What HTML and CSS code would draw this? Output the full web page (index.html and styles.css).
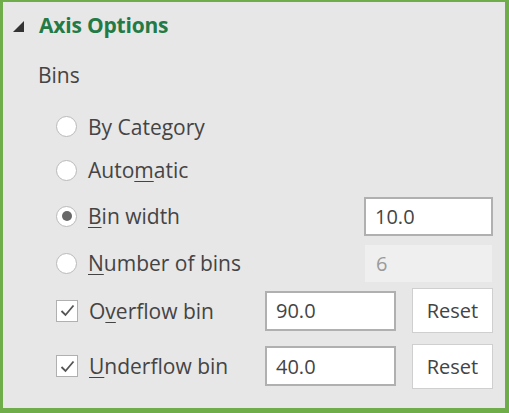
FILE: index.html
```html
<!DOCTYPE html>
<html lang="en">
<head>
<meta charset="utf-8">
<title>Axis Options</title>
<link rel="stylesheet" href="styles.css">
</head>
<body>
<div class="panel">
  <div class="header">
    <svg class="tri" width="12" height="11" viewBox="0 0 12 11"><polygon points="11,0 11,11 0,11" fill="#333"/></svg>
    <span class="title">Axis Options</span>
  </div>
  <div class="bins">Bins</div>
  <div class="row r1">
    <span class="radio"></span>
    <span class="label">By Category</span>
  </div>
  <div class="row r2">
    <span class="radio"></span>
    <span class="label">Auto<u>m</u>atic</span>
  </div>
  <div class="row r3">
    <span class="radio on"><span class="dot"></span></span>
    <span class="label"><u>B</u>in width</span>
    <span class="input wide">10.0</span>
  </div>
  <div class="row r4">
    <span class="radio"></span>
    <span class="label"><u>N</u>umber of bins</span>
    <span class="input wide disabled">6</span>
  </div>
  <div class="row r5">
    <span class="check"><svg width="15" height="13" viewBox="0 0 15 13"><polyline points="1.5,7 5.5,11 13.5,1.5" fill="none" stroke="#555" stroke-width="1.8"/></svg></span>
    <span class="label">O<u>v</u>erflow bin</span>
    <span class="input mid">90.0</span>
    <span class="btn">Reset</span>
  </div>
  <div class="row r6">
    <span class="check"><svg width="15" height="13" viewBox="0 0 15 13"><polyline points="1.5,7 5.5,11 13.5,1.5" fill="none" stroke="#555" stroke-width="1.8"/></svg></span>
    <span class="label"><u>U</u>nderflow bin</span>
    <span class="input mid">40.0</span>
    <span class="btn">Reset</span>
  </div>
</div>
</body>
</html>
```
FILE: styles.css
```css
html, body {
  margin: 0;
  padding: 0;
}
body {
  width: 509px;
  height: 413px;
  overflow: hidden;
  font-family: "Open Sans", "Noto Sans", sans-serif;
  color: #444;
}
.panel {
  box-sizing: border-box;
  width: 509px;
  height: 413px;
  background: #e7e7e7;
  border-style: solid;
  border-color: #6fad4b;
  border-width: 2px 4px 5px 3px;
  display: flex;
  flex-direction: column;
}
.header {
  height: 46px;
  display: flex;
  align-items: center;
  padding-left: 10px;
}
.tri {
  display: block;
  margin-top: 2px;
}
.title {
  margin-left: 14px;
  font-weight: 700;
  font-size: 21px;
  color: #237a45;
  letter-spacing: -0.2px;
}
.bins {
  height: 54px;
  display: flex;
  align-items: center;
  padding-left: 35px;
  font-size: 21px;
}
.row {
  display: flex;
  align-items: center;
  padding-left: 53px;
  padding-right: 12px;
  font-size: 21px;
}
.r1 { height: 49px; }
.r2 { height: 38px; }
.r3 { height: 54px; }
.r4 { height: 40px; }
.r5 { height: 55px; }
.r6 { height: 56px; }
.label {
  flex: 1;
  margin-left: 11px;
}
u {
  text-decoration-thickness: 1px;
  text-underline-offset: 3px;
}
.radio {
  box-sizing: border-box;
  width: 21px;
  height: 21px;
  border-radius: 50%;
  border: 1.5px solid #bababa;
  background: #fff;
  display: flex;
  align-items: center;
  justify-content: center;
  flex: none;
}
.dot {
  width: 10px;
  height: 10px;
  border-radius: 50%;
  background: #686868;
}
.check {
  box-sizing: border-box;
  width: 22px;
  height: 22px;
  border: 1.5px solid #b0b0b0;
  background: #fff;
  display: flex;
  align-items: center;
  justify-content: center;
  flex: none;
}
.check svg { display: block; }
.input {
  box-sizing: border-box;
  display: flex;
  align-items: center;
  background: #fff;
  border: 2px solid #b0b0b0;
  padding-left: 9px;
  font-size: 20px;
  color: #444;
  flex: none;
}
.wide {
  width: 129px;
  height: 39px;
}
.disabled {
  background: #efefef;
  border-color: #efefef;
  color: #9a9a9a;
  width: 127px;
  height: 37px;
  margin-right: 1px;
}
.mid {
  width: 131px;
  height: 40px;
  margin-right: 16px;
}
.btn {
  box-sizing: border-box;
  width: 81px;
  height: 45px;
  background: #fff;
  border: 1px solid #cfcfcf;
  display: flex;
  align-items: center;
  justify-content: center;
  font-size: 20px;
  color: #444;
  flex: none;
}
```
